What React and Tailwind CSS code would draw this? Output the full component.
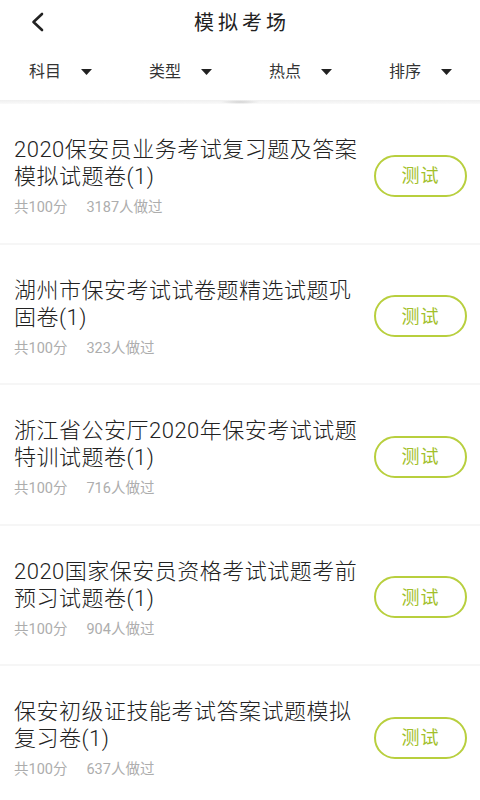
const FONT = { fontFamily: 'Roboto, "Noto Sans CJK SC", "Noto Sans", sans-serif' }

const filters = ['科目', '类型', '热点', '排序']

const papers = [
  { title: '2020保安员业务考试复习题及答案模拟试题卷(1)', count: 3187 },
  { title: '湖州市保安考试试卷题精选试题巩固卷(1)', count: 323 },
  { title: '浙江省公安厅2020年保安考试试题特训试题卷(1)', count: 716 },
  { title: '2020国家保安员资格考试试题考前预习试题卷(1)', count: 904 },
  { title: '保安初级证技能考试答案试题模拟复习卷(1)', count: 637 },
]

function Caret() {
  return (
    <svg width="11" height="6" viewBox="0 0 11 6">
      <path d="M0 0 H11 L5.5 6 Z" fill="#222" />
    </svg>
  )
}

function PaperRow({ paper }) {
  return (
    <div className="flex items-center pl-[14px] pr-[13px] pt-[32px] pb-[25.5px] border-b-2 border-[#f6f6f6]">
      <div className="flex-1 min-w-0 pr-[12px]">
        <div className="text-[22px] leading-[27px] tracking-[0.5px] text-[#222] font-light">{paper.title}</div>
        <div className="flex gap-[19px] mt-[9px] text-[14.5px] leading-[18px] text-[#adadad]">
          <span>共100分</span>
          <span>{paper.count}人做过</span>
        </div>
      </div>
      <button className="w-[93px] h-[42px] rounded-full border-2 border-[#b8cf3e] text-[18px] text-[#a2c02a] tracking-[1px] shrink-0 mb-[2px]">
        测试
      </button>
    </div>
  )
}

export default function App() {
  return (
    <div className="w-[480px] h-[800px] overflow-hidden bg-white" style={FONT}>
      {/* Header */}
      <div className="relative h-[45px] flex items-center justify-center">
        <button className="absolute left-[30px] top-[12px]">
          <svg width="16" height="20" viewBox="0 0 16 20">
            <path d="M12 2 L3.5 10 L12 18" fill="none" stroke="#222" strokeWidth="2.6" strokeLinecap="round" strokeLinejoin="round" />
          </svg>
        </button>
        <h1 className="text-[20px] tracking-[4px] text-[#222] pl-[4px]">模拟考场</h1>
      </div>

      {/* Filters */}
      <div className="grid grid-cols-4 h-[55px]">
        {filters.map(f => (
          <div key={f} className="flex items-center pl-[29px] pb-[2px]">
            <span className="text-[16px] text-[#333]">{f}</span>
            <span className="ml-[20px] flex items-center">
              <Caret />
            </span>
          </div>
        ))}
      </div>

      {/* Shadow band */}
      <div className="h-[4px] bg-gradient-to-b from-[#efefef] to-[#fafafa] flex justify-center">
        <div className="w-[40px] h-[4px] rounded-full bg-[radial-gradient(ellipse_at_center,#d2d2d2,transparent_70%)]" />
      </div>

      {/* List */}
      <div>
        {papers.map(p => <PaperRow key={p.title} paper={p} />)}
      </div>
    </div>
  )
}
